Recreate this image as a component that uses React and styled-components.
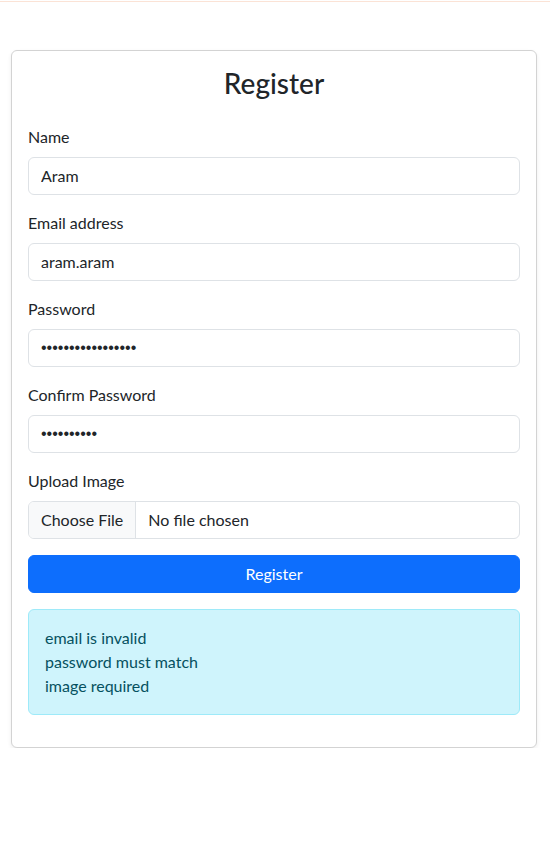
import React from "react";
import styled, { createGlobalStyle } from "styled-components";

const GlobalStyle = createGlobalStyle`
  * { box-sizing: border-box; }
  body {
    margin: 0;
    background: #fff;
    color: #212529;
    font-family: "Lato", "Liberation Sans", sans-serif;
    font-size: 16px;
    line-height: 1.5;
  }
`;

const TopRule = styled.div`
  height: 2px;
  border-bottom: 1px solid #fbe3d6;
`;

const Page = styled.main`
  padding: 48px 13px 0 11px;
`;

const Card = styled.div`
  border: 1px solid #d3d3d3;
  border-radius: 6px;
  box-shadow: 0 2px 4px rgba(0, 0, 0, 0.075);
  padding: 16px;
  background: #fff;
`;

const Title = styled.h2`
  margin: 0 0 24px;
  text-align: center;
  font-size: 28px;
  font-weight: 500;
  line-height: 1.2;
`;

const Field = styled.div`
  margin-bottom: 16px;
`;

const Label = styled.label`
  display: block;
  margin-bottom: 8px;
`;

const Input = styled.input`
  display: block;
  width: 100%;
  height: 38px;
  padding: 6px 12px;
  font: inherit;
  font-family: ${(p) =>
    p.type === "password" ? '"Liberation Sans", sans-serif' : "inherit"};
  color: #212529;
  border: 1px solid #dee2e6;
  border-radius: 6px;
  outline: none;
`;

const FileBox = styled.div`
  display: flex;
  height: 38px;
  border: 1px solid #dee2e6;
  border-radius: 6px;
  overflow: hidden;
`;

const FileButton = styled.span`
  display: flex;
  align-items: center;
  padding: 0 12px;
  background: #f8f9fa;
  border-right: 1px solid #dee2e6;
`;

const FileName = styled.span`
  display: flex;
  align-items: center;
  padding: 0 12px;
`;

const Button = styled.button`
  display: block;
  width: 100%;
  height: 38px;
  margin-bottom: 16px;
  border: 1px solid #0d6efd;
  border-radius: 6px;
  background: #0d6efd;
  color: #fff;
  font: inherit;
  cursor: pointer;
`;

const Alert = styled.div`
  padding: 16px;
  margin-bottom: 16px;
  border: 1px solid #9eeaf9;
  border-radius: 6px;
  background: #cff4fc;
  color: #055160;
`;

const errors = ["email is invalid", "password must match", "image required"];

export default function App() {
  return (
    <>
      <GlobalStyle />
      <TopRule />
      <Page>
        <Card>
          <Title>Register</Title>
          <Field>
            <Label>Name</Label>
            <Input type="text" defaultValue="Aram" />
          </Field>
          <Field>
            <Label>Email address</Label>
            <Input type="text" defaultValue="aram.aram" />
          </Field>
          <Field>
            <Label>Password</Label>
            <Input type="password" defaultValue="aaaaaaaaaaaaaaaaa" />
          </Field>
          <Field>
            <Label>Confirm Password</Label>
            <Input type="password" defaultValue="aaaaaaaaaa" />
          </Field>
          <Field>
            <Label>Upload Image</Label>
            <FileBox>
              <FileButton>Choose File</FileButton>
              <FileName>No file chosen</FileName>
            </FileBox>
          </Field>
          <Button type="button">Register</Button>
          <Alert>
            {errors.map((e) => (
              <div key={e}>{e}</div>
            ))}
          </Alert>
        </Card>
      </Page>
    </>
  );
}
